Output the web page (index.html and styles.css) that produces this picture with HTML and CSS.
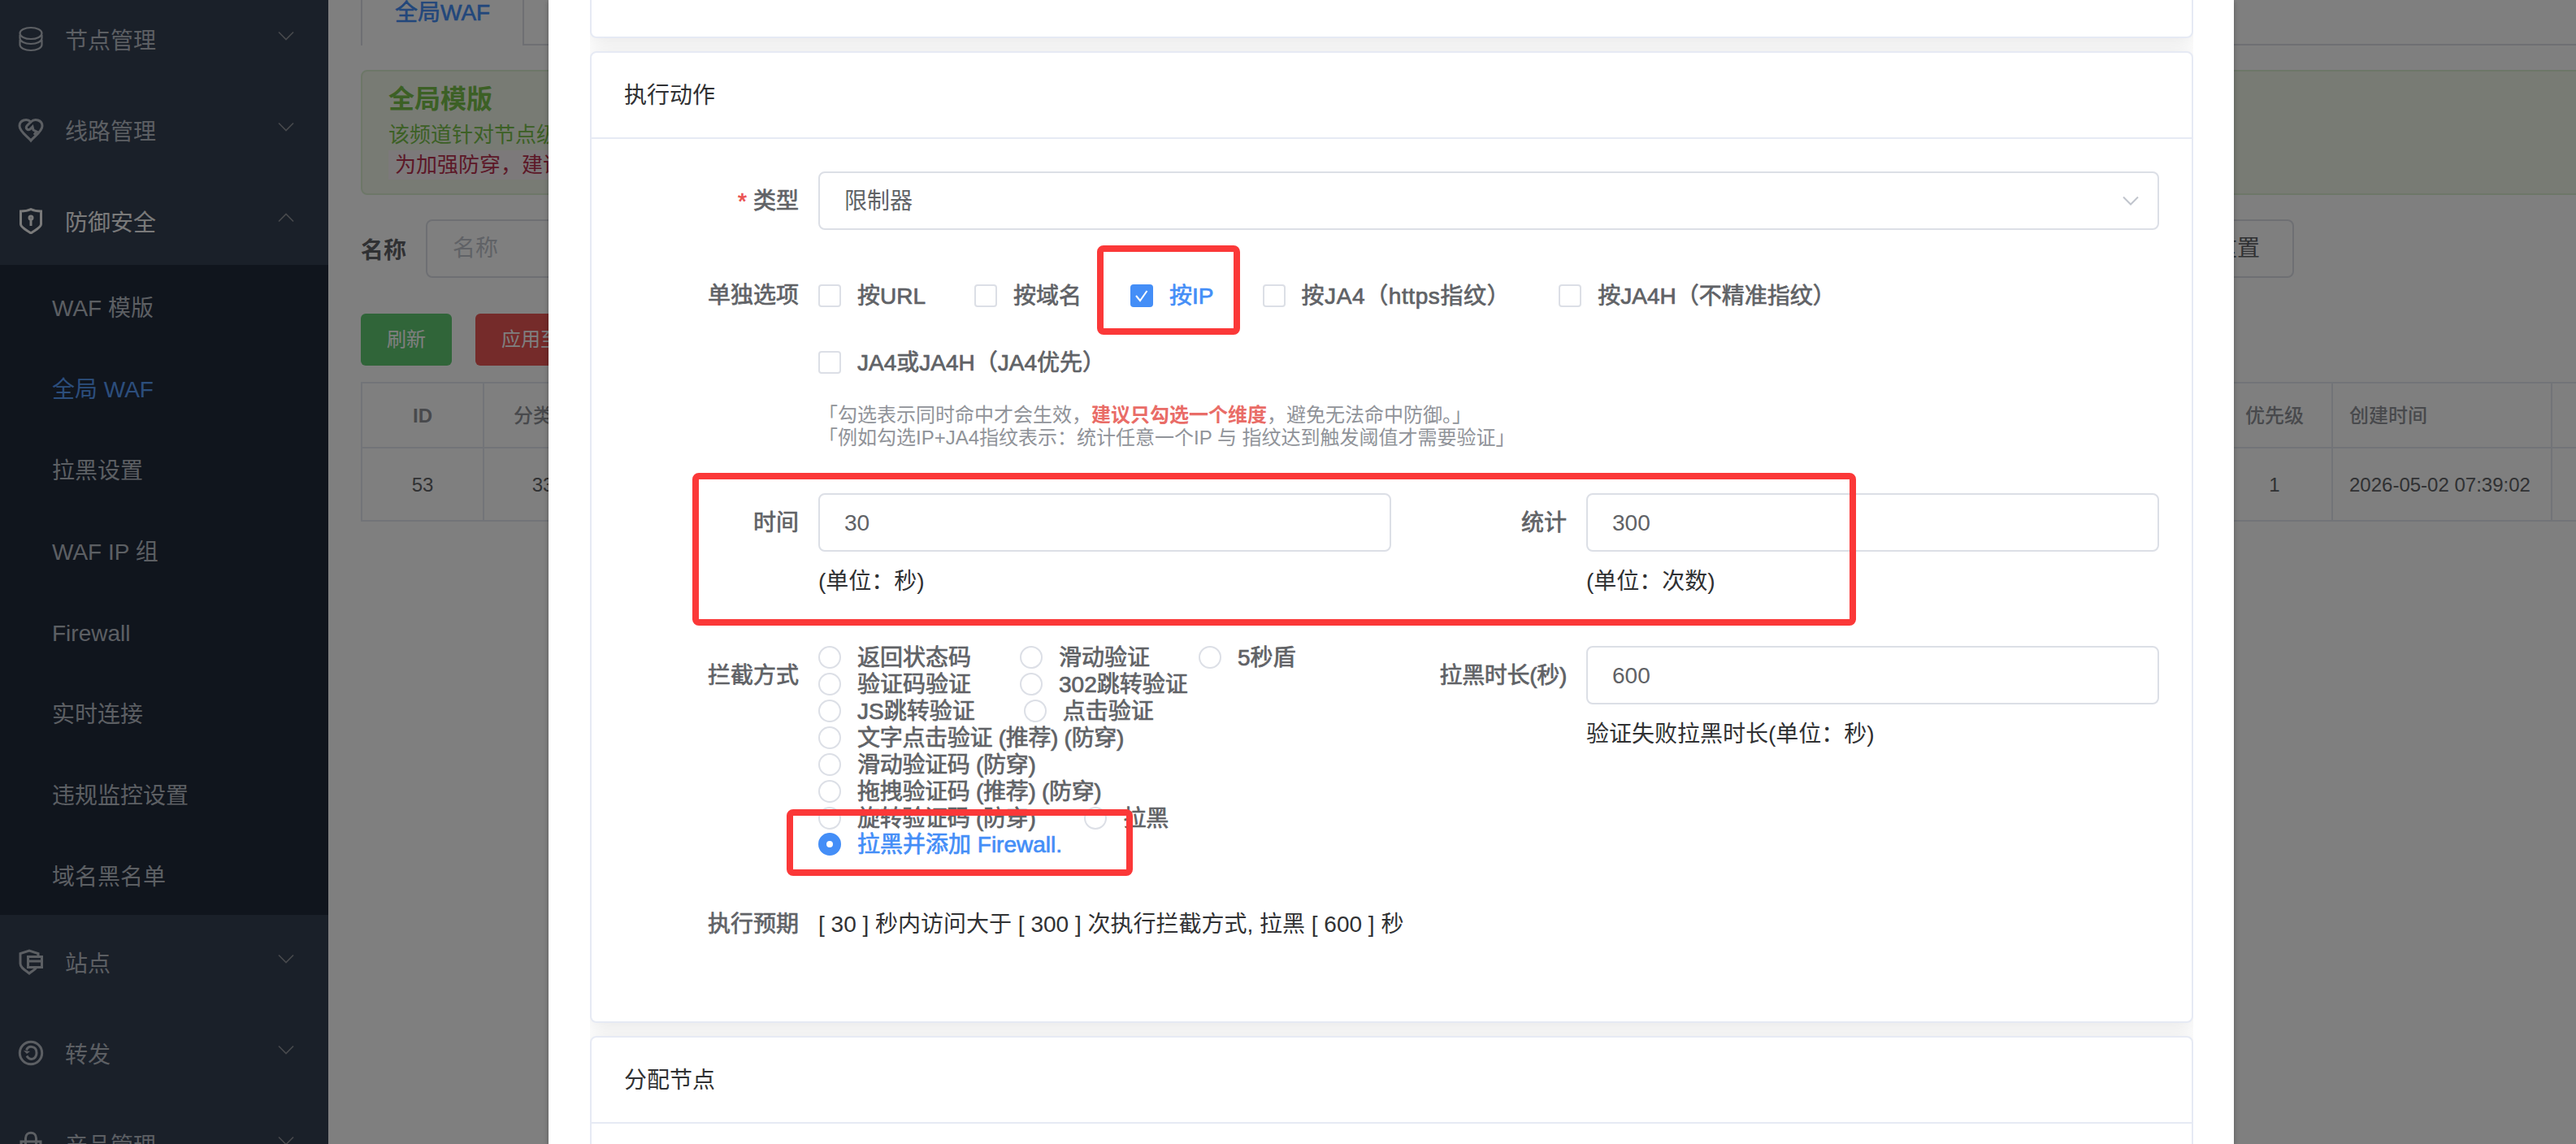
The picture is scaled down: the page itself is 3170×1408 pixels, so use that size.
FILE: index.html
```html
<!DOCTYPE html>
<html lang="zh-CN">
<head>
    <meta charset="UTF-8">
    <title>全局WAF</title>
    <link rel="stylesheet" href="styles.css">
</head>
<body>

    <div class="app">
        <!-- Sidebar -->
        <div class="sidebar">
            <div class="menu-item">
                <svg class="menu-icon" viewBox="0 0 32 32"><ellipse cx="16" cy="9" rx="13.500" ry="7"/><path d="M2.500 11v4c0 4 6 7 13.500 7s13.500-3 13.500-7v-4M2.500 17v6c0 4 6 7 13.500 7s13.500-3 13.500-7v-6"/></svg>
                <span>节点管理</span>
                <svg class="arrow" viewBox="0 0 20 12"><path d="M1 1.500l9 9 9-9"/></svg>
            </div>
            <div class="menu-item">
                <svg class="menu-icon bold" viewBox="0 0 32 32"><path d="M16 29C12 24 2 18 2 11c0-7 9-10 14-5 5-5 14-2 14 5 0 7-10 13-14 18z"/><path d="M16 6l-5 5c-2 3 1 6 4 4l3-3 1 4 4 2-3 4"/></svg>
                <span>线路管理</span>
                <svg class="arrow" viewBox="0 0 20 12"><path d="M1 1.500l9 9 9-9"/></svg>
            </div>
            <div class="menu-item opened">
                <svg class="menu-icon bold" viewBox="0 0 32 32"><path d="M16 1.500C12 3.500 8 4 3.500 4v16c0 4 7 7 12.500 11 5.500-4 12.500-7 12.500-11V4C24 4 20 3.500 16 1.500z"/><path d="M16 13v9"/><circle cx="16" cy="12" r="2"/></svg>
                <span>防御安全</span>
                <svg class="arrow" viewBox="0 0 20 12"><path d="M1 10.500l9-9 9 9"/></svg>
            </div>
            <div class="submenu">
                <div class="submenu-item">WAF 模版</div>
                <div class="submenu-item active">全局 WAF</div>
                <div class="submenu-item">拉黑设置</div>
                <div class="submenu-item">WAF IP 组</div>
                <div class="submenu-item">Firewall</div>
                <div class="submenu-item">实时连接</div>
                <div class="submenu-item">违规监控设置</div>
                <div class="submenu-item">域名黑名单</div>
            </div>
            <div class="menu-item">
                <svg class="menu-icon bold" viewBox="0 0 32 32"><path d="M25 8V5.500L14 2 3 5.500V18c0 5 6 8 11 12 3-2.500 6-4 8.500-6.500"/><rect x="12.500" y="9.500" width="17" height="13"/><path d="M12.500 15h17"/></svg>
                <span>站点</span>
                <svg class="arrow" viewBox="0 0 20 12"><path d="M1 1.500l9 9 9-9"/></svg>
            </div>
            <div class="menu-item">
                <svg class="menu-icon bold" viewBox="0 0 32 32"><circle cx="16" cy="16" r="13.700"/><path d="M10.500 12.500C12 9 15 8 17.500 8.500 21 9 23 12 23 16s-2.500 7.500-6 7.500c-2.500 0-4.500-1-6-4"/><path d="M7 13l4 4 4-3z" class="solid"/></svg>
                <span>转发</span>
                <svg class="arrow" viewBox="0 0 20 12"><path d="M1 1.500l9 9 9-9"/></svg>
            </div>
            <div class="menu-item">
                <svg class="menu-icon bold" viewBox="0 0 32 32"><rect x="4" y="13" width="24" height="17"/><path d="M9.500 17V9c0-9 13-9 13 0v8"/></svg>
                <span>产品管理</span>
                <svg class="arrow" viewBox="0 0 20 12"><path d="M1 1.500l9 9 9-9"/></svg>
            </div>
        </div>

        <!-- Page behind the dialog -->
        <div class="main">
            <div class="tabs">
                <div class="tab">全局WAF</div>
                <div class="tabs-line"></div>
            </div>
            <div class="alert">
                <div class="alert-title">全局模版</div>
                <div class="alert-text">该频道针对节点级</div>
                <div class="alert-code">为加强防穿，建议</div>
            </div>
            <div class="search">
                <label>名称</label>
                <div class="search-input">名称</div>
                <div class="reset">重置</div>
            </div>
            <div class="toolbar">
                <div class="btn success">刷新</div>
                <div class="btn danger">应用至节点</div>
            </div>
            <div class="table">
                <div class="tr th">
                    <div class="td id">ID</div>
                    <div class="td">分类ID</div>
                    <div class="td"></div>
                    <div class="td">优先级</div>
                    <div class="td left">创建时间</div>
                    <div class="td"></div>
                </div>
                <div class="tr">
                    <div class="td">53</div>
                    <div class="td">33</div>
                    <div class="td"></div>
                    <div class="td">1</div>
                    <div class="td left">2026-05-02 07:39:02</div>
                    <div class="td"></div>
                </div>
            </div>
        </div>
    </div>

    <!-- Dialog -->
    <div class="overlay">
        <div class="dialog">
            <div class="cards">
                <div class="card card-prev"></div>

                <div class="card card-action">
                    <div class="card-header">执行动作</div>
                    <div class="card-body">
                        <div class="form-item type-item">
                            <label class="label required">类型</label>
                            <div class="input select">
                                <span>限制器</span>
                                <svg class="select-arrow" viewBox="0 0 20 12"><path d="M1 1.500l9 9 9-9"/></svg>
                            </div>
                        </div>

                        <div class="form-item option-item">
                            <label class="label">单独选项</label>
                            <div class="content">
                                <div class="checks">
                                    <div class="choice"><i class="box"></i>按URL</div>
                                    <div class="choice"><i class="box"></i>按域名</div>
                                    <div class="choice checked"><i class="box"><svg viewBox="0 0 28 28"><path d="M7 14l5 6 8.500-12"/></svg></i>按IP</div>
                                    <div class="choice wide"><i class="box"></i>按JA4（https指纹）</div>
                                    <div class="choice"><i class="box"></i>按JA4H（不精准指纹）</div>
                                </div>
                                <div class="checks">
                                    <div class="choice"><i class="box"></i>JA4或JA4H（JA4优先）</div>
                                </div>
                                <div class="tips">
                                    <div>「勾选表示同时命中才会生效，<b>建议只勾选一个维度</b>，避免无法命中防御。」</div>
                                    <div>「例如勾选IP+JA4指纹表示：统计任意一个IP 与 指纹达到触发阈值才需要验证」</div>
                                </div>
                            </div>
                        </div>

                        <div class="form-row time-row">
                            <div class="form-item">
                                <label class="label">时间</label>
                                <div class="content">
                                    <div class="input">30</div>
                                    <div class="unit">(单位：秒)</div>
                                </div>
                            </div>
                            <div class="form-item">
                                <label class="label">统计</label>
                                <div class="content">
                                    <div class="input">300</div>
                                    <div class="unit">(单位：次数)</div>
                                </div>
                            </div>
                        </div>

                        <div class="form-row block-row">
                            <div class="form-item">
                                <label class="label">拦截方式</label>
                                <div class="content radios">
                                    <div class="radio-line">
                                        <div class="choice"><i class="dot"></i>返回状态码</div>
                                        <div class="choice"><i class="dot"></i>滑动验证</div>
                                        <div class="choice"><i class="dot"></i>5秒盾</div>
                                    </div>
                                    <div class="radio-line">
                                        <div class="choice"><i class="dot"></i>验证码验证</div>
                                        <div class="choice"><i class="dot"></i>302跳转验证</div>
                                    </div>
                                    <div class="radio-line">
                                        <div class="choice"><i class="dot"></i>JS跳转验证</div>
                                        <div class="choice"><i class="dot"></i>点击验证</div>
                                    </div>
                                    <div class="radio-line tight"><div class="choice"><i class="dot"></i>文字点击验证 (推荐) (防穿)</div></div>
                                    <div class="radio-line tight"><div class="choice"><i class="dot"></i>滑动验证码 (防穿)</div></div>
                                    <div class="radio-line tight"><div class="choice"><i class="dot"></i>拖拽验证码 (推荐) (防穿)</div></div>
                                    <div class="radio-line tight">
                                        <div class="choice"><i class="dot"></i>旋转验证码 (防穿)</div>
                                        <div class="choice"><i class="dot"></i>拉黑</div>
                                    </div>
                                    <div class="radio-line"><div class="choice checked"><i class="dot"></i>拉黑并添加 Firewall.</div></div>
                                </div>
                            </div>
                            <div class="form-item">
                                <label class="label tight">拉黑时长(秒)</label>
                                <div class="content">
                                    <div class="input">600</div>
                                    <div class="unit">验证失败拉黑时长(单位：秒)</div>
                                </div>
                            </div>
                        </div>

                        <div class="form-item">
                            <label class="label">执行预期</label>
                            <div class="content expect">[ 30 ] 秒内访问大于 [ 300 ] 次执行拦截方式, 拉黑 [ 600 ] 秒</div>
                        </div>
                    </div>
                </div>

                <div class="card card-next">
                    <div class="card-header">分配节点</div>
                </div>
            </div>
        </div>
    </div>

    <!-- Red marks over the form -->
    <div class="mark mark-ip"></div>
    <div class="mark mark-limit"></div>
    <div class="mark mark-firewall"></div>

</body>
</html>
```

FILE: styles.css
```css
* {
    box-sizing: border-box;
}
body {
    margin: 0;
    height: 1408px;
    overflow: hidden;
    position: relative;
    background: #fff;
    color: #303133;
    font-family: "Liberation Sans", "Noto Sans CJK SC", sans-serif;
    font-size: 28px;
}
svg {
    fill: none;
    stroke: currentColor;
    stroke-width: 2;
    display: block;
}
.app {
    display: flex;
    height: 1408px;
    overflow: hidden;
}

/* sidebar */
.sidebar {
    width: 404px;
    flex-shrink: 0;
    margin-top: -10px;
    background: #344053;
    color: #bfcbd9;
}
.menu-item {
    display: flex;
    align-items: center;
    height: 112px;
    padding: 4px 42px 0 22px;
    color: #b9bec7;
}
.menu-item.opened {
    color: #f4f4f5;
}
.menu-item span {
    flex: 1;
}
.menu-icon {
    width: 32px;
    height: 32px;
    margin-right: 26px;
    stroke-width: 2.2;
}
.menu-icon.bold {
    stroke-width: 3;
}
.solid {
    fill: currentColor;
    stroke: none;
}
.arrow {
    width: 20px;
    height: 12px;
    margin-bottom: 8px;
    color: #909399;
    stroke-width: 1.6;
}
.submenu {
    background: #202a3a;
}
.submenu-item {
    height: 100px;
    line-height: 107px;
    padding-left: 64px;
    color: #b9bec7;
}
.submenu-item.active {
    color: #589cf8;
}

/* page */
.main {
    flex: 1;
    min-width: 0;
    padding-left: 40px;
}
.tabs {
    display: flex;
    height: 56px;
}
.tab {
    width: 201px;
    padding-left: 40px;
    line-height: 32px;
    color: #448ef7;
    border-left: 2px solid #dcdfe6;
    border-right: 2px solid #dcdfe6;
    -webkit-text-stroke: 0.6px;
}
.tabs-line {
    flex: 1;
    border-bottom: 2px solid #dcdfe6;
}
.alert {
    width: 2800px;
    height: 154px;
    margin-top: 30px;
    padding: 15px 32px;
    background: #f0f6e8;
    border: 2px solid #dbeed0;
    border-radius: 8px;
    color: #78c14a;
    font-size: 26px;
}
.alert-title {
    font-size: 32px;
    font-weight: bold;
    line-height: 38px;
}
.alert-text {
    margin-top: 6px;
    line-height: 38px;
}
.alert-code {
    width: 300px;
    padding-left: 8px;
    line-height: 36px;
    background: #f9f2f4;
    color: #b8304f;
}
.search {
    display: flex;
    align-items: center;
    height: 72px;
    margin-top: 30px;
}
.search label {
    width: 80px;
    font-weight: bold;
    color: #606266;
}
.search-input {
    width: 400px;
    height: 72px;
    line-height: 68px;
    padding-left: 31px;
    border: 2px solid #dcdfe6;
    border-radius: 8px;
    color: #c0c4cc;
}
.reset {
    width: 140px;
    height: 72px;
    line-height: 68px;
    margin-left: 1759px;
    text-align: center;
    border: 2px solid #dcdfe6;
    border-radius: 8px;
    color: #606266;
}
.toolbar {
    display: flex;
    gap: 29px;
    margin-top: 44px;
}
.btn {
    height: 64px;
    line-height: 64px;
    padding: 0 32px;
    border-radius: 6px;
    font-size: 24px;
    color: #fff;
}
.btn.success {
    background: #61ca73;
}
.btn.danger {
    background: #ea5654;
}
.table {
    width: 2800px;
    margin-top: 20px;
    border-top: 2px solid #e4e9f1;
    border-left: 2px solid #e4e9f1;
    font-size: 24px;
    color: #606266;
}
.tr {
    display: grid;
    grid-template-columns: 150px 146px 1987px 142px 270px 1fr;
    height: 90px;
    line-height: 90px;
    border-bottom: 2px solid #e4e9f1;
}
.tr.th {
    height: 80px;
    line-height: 80px;
    font-weight: 500;
    color: #909399;
}
.td {
    text-align: center;
    border-right: 2px solid #e4e9f1;
}
.td.id {
    font-weight: bold;
}
.td.left {
    text-align: left;
    padding-left: 20px;
}

/* dialog */
.overlay {
    position: absolute;
    inset: 0;
    background: rgba(0, 0, 0, 0.5);
}
.dialog {
    width: 2074px;
    height: 1408px;
    margin-left: 675px;
    padding: 0 50px 0 51px;
    background: #fff;
    box-shadow: 0 2px 6px rgba(0, 0, 0, 0.3);
}
.cards {
    height: 1408px;
    overflow: hidden;
}
.card {
    background: #fff;
    border: 2px solid #e6eaf4;
    border-radius: 8px;
    box-shadow: 0 4px 24px rgba(0, 0, 0, 0.1);
    margin-bottom: 16px;
}
.card-prev {
    height: 67px;
    margin-top: -20px;
}
.card-action {
    height: 1196px;
}
.card-next {
    height: 300px;
}
.card-header {
    height: 106px;
    line-height: 106px;
    padding-left: 40px;
    border-bottom: 2px solid #e6eaf4;
}
.card-body {
    padding: 40px;
}

/* form */
.form-item {
    display: flex;
}
.form-row {
    display: grid;
    grid-template-columns: 945px 944px;
}
.label {
    width: 239px;
    height: 72px;
    padding-right: 24px;
    line-height: 74px;
    text-align: right;
    color: #606266;
    flex-shrink: 0;
    -webkit-text-stroke: 0.7px;
}
.tight {
    letter-spacing: -0.3px;
}
.required::before {
    content: "*";
    margin-right: 8px;
    color: #eb5350;
}
.content {
    flex: 1;
}
.input {
    height: 72px;
    line-height: 70px;
    padding: 0 30px;
    border: 2px solid #dcdfe6;
    border-radius: 8px;
    color: #606266;
}
.select {
    flex: 1;
    display: flex;
    align-items: center;
    justify-content: space-between;
    padding-right: 23px;
}
.select span {
    padding-top: 2px;
}
.select-arrow {
    width: 20px;
    height: 12px;
    color: #c0c4cc;
}
.type-item {
    margin-bottom: 44px;
}
.option-item .content {
    margin-top: -2px;
}
.form-row .input {
    width: 705px;
}
.checks {
    display: flex;
    height: 74px;
    margin-bottom: 8px;
}
.choice {
    display: flex;
    align-items: center;
    margin-right: 60px;
    color: #606266;
    white-space: nowrap;
    -webkit-text-stroke: 0.7px;
}
.choice.wide {
    letter-spacing: 0.6px;
}
.choice.checked {
    color: #448ef7;
}
.box,
.dot {
    width: 28px;
    height: 28px;
    margin-top: 4px;
    margin-right: 20px;
    border: 2px solid #dcdfe6;
    border-radius: 4px;
    background: #fff;
}
.checked .box {
    border: none;
    background: #448ef7;
    color: #fff;
}
.dot {
    border-radius: 50%;
}
.checked .dot {
    border: 10px solid #448ef7;
}
.tips {
    margin-top: 16px;
    margin-bottom: 54px;
    font-size: 24px;
    line-height: 28px;
    color: #909399;
}
.tips b {
    color: #e96c67;
}
.unit {
    line-height: 74px;
}
.block-row {
    height: 263px;
    margin-top: 42px;
    margin-bottom: 43px;
}
.radios {
    margin-top: -4px;
}
.radio-line {
    display: flex;
    height: 32.86px;
}
.expect {
    line-height: 73px;
}

/* red marks */
.mark {
    position: absolute;
    border: 8px solid #fb3838;
    border-radius: 8px;
}
.mark-ip {
    left: 1350px;
    top: 302px;
    width: 176px;
    height: 110px;
}
.mark-limit {
    left: 852px;
    top: 582px;
    width: 1432px;
    height: 188px;
}
.mark-firewall {
    left: 968px;
    top: 996px;
    width: 426px;
    height: 82px;
}
```
